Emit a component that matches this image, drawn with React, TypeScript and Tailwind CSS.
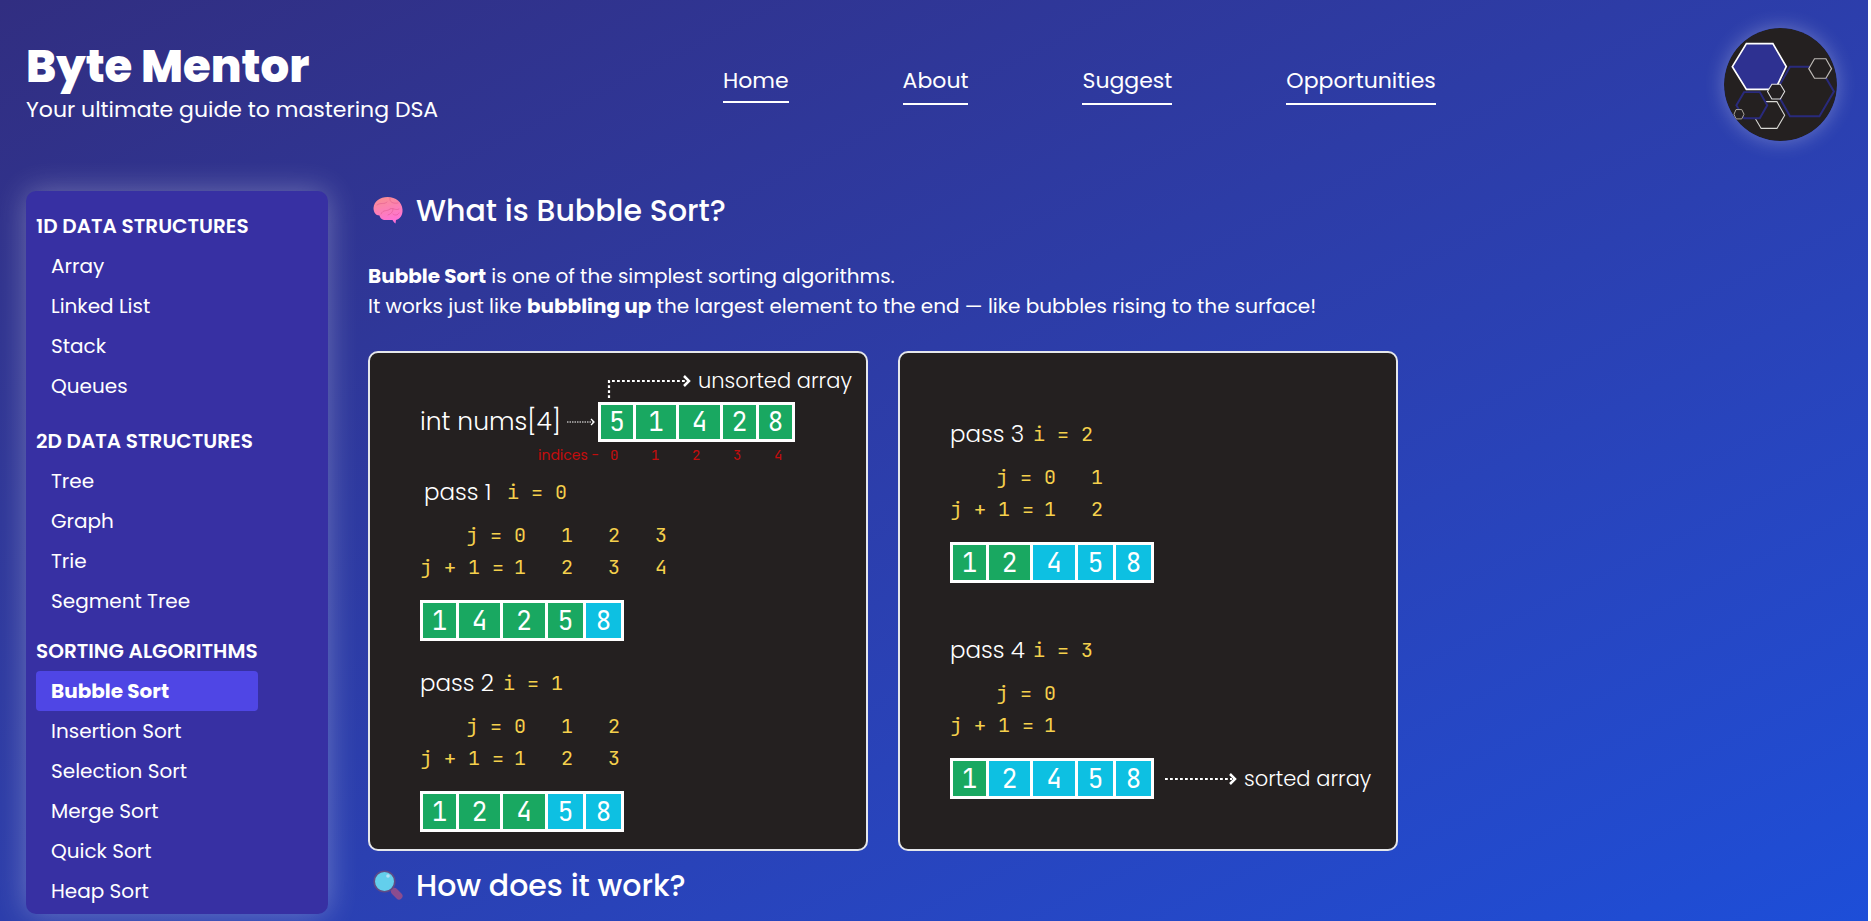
import React from "react";

const SANS = "font-['Poppins','Inter',sans-serif]";
const MONO = "font-['JetBrains_Mono','DejaVu_Sans_Mono',monospace]";

type Section = { title: string; items: string[]; className: string };

const sections: Section[] = [
  { title: "1D DATA STRUCTURES", items: ["Array", "Linked List", "Stack", "Queues"], className: "" },
  { title: "2D DATA STRUCTURES", items: ["Tree", "Graph", "Trie", "Segment Tree"], className: "mt-[15px]" },
  {
    title: "SORTING ALGORITHMS",
    items: ["Bubble Sort", "Insertion Sort", "Selection Sort", "Merge Sort", "Quick Sort", "Heap Sort"],
    className: "mt-[10px]",
  },
];

function Logo() {
  return (
    <svg viewBox="0 0 114 114" className="h-[113px] w-[113px] shrink-0 rounded-full shadow-[0_0_20px_rgba(255,255,255,0.3)]" role="img" aria-label="Byte Mentor logo">
      <circle cx="57" cy="57" r="57" fill="#242020" />
      <g fill="#242020" strokeLinejoin="miter">
        <path d="M66.6 39H96.3L110.9 64 96.3 89H66.6L52.4 64Z" stroke="#292a7c" strokeWidth="2" />
        <path d="M22.6 15.7H49.3L62.8 39 51.7 62H22.6L8.4 39Z" fill="#2e3191" stroke="#fff" strokeWidth="1.7" />
        <path d="M38.5 74.3H53.4L61.2 88 53.4 101.3H37.5L31.4 91Z" stroke="#d8d8d4" strokeWidth="1.1" />
        <path d="M20.2 64.7H36.1L43.6 78 36.1 91H20.2L12.5 78Z" stroke="#292a7c" strokeWidth="2" />
        <path d="M48.3 56.7H56.8L61.2 64 56.8 71.7H48.3L43.9 64Z" stroke="#e0e0e0" strokeWidth="1.1" />
        <path d="M91.3 31H102.8L108.5 41 102.8 50.7H91.3L85.5 41Z" stroke="#bdb9b5" strokeWidth="1.2" />
        <path d="M12.1 82.3H17.9L20.2 87 17.9 91.7H12.1L10.1 87Z" stroke="#aaa59d" strokeWidth="1" />
      </g>
    </svg>
  );
}

function Brain() {
  return (
    <svg viewBox="0 0 30 28" className="h-7 w-[30px]" aria-hidden="true">
      <defs>
        <linearGradient id="brain" x1="0" y1="0" x2="0.3" y2="1">
          <stop offset="0" stopColor="#f9908d" />
          <stop offset="1" stopColor="#ff72d6" />
        </linearGradient>
      </defs>
      <path d="M0.5 12C1 5 7 1 14.500 1C23 1 29 6 29.500 13.500C30 19 27 23 23 24L22.500 27.500C21 26.500 20 25 19.500 24H11C8 23.500 7 21.500 6.500 19.500C2.500 19.500 0.500 16 0.500 12Z" fill="url(#brain)" />
      <path d="M4 9C8 6 11 9 14 6M17 2C16 6 20 8 25 7M8 18C10 13 14 16 17 13M17 13C20 11 22 15 26 13M20 13C20 16 18 18 15 19M20 18C22 20 25 19 26 17" fill="none" stroke="#d94f86" strokeOpacity="0.5" strokeWidth="0.9" strokeLinecap="round" />
    </svg>
  );
}

function Magnifier() {
  return (
    <svg viewBox="0 0 30 30" className="h-[30px] w-[30px]" aria-hidden="true">
      <path d="M18.500 18.500L22 22" stroke="#69538f" strokeWidth="4" />
      <path d="M21.500 21.500L26 26" stroke="#8a4c8f" strokeWidth="7" strokeLinecap="round" />
      <circle cx="11.500" cy="11.500" r="10.300" fill="#63cfec" stroke="#5f4c86" strokeWidth="1.600" />
      <circle cx="15" cy="6" r="1.800" fill="#b5e2f7" />
    </svg>
  );
}

type Cell = { value: number; done?: boolean };
const widths = ["w-[33px]", "w-[41px]", "w-[42px]", "w-[35px]", "w-[35px]"];

function ArrayBoxes({ cells }: { cells: Cell[] }) {
  return (
    <div className={`flex gap-[3px] bg-white p-[3px] text-[26px] leading-[35px] ${MONO}`}>
      {cells.map((c, i) => (
        <span key={i} className={`text-center ${widths[i]} ${c.done ? "bg-[#0dc0e2]" : "bg-[#19a861]"}`}>
          {c.value}
        </span>
      ))}
    </div>
  );
}

function IndexRow({ label, values }: { label: string; values: number[] }) {
  return (
    <div className="flex h-8 items-center">
      <span className="w-[94px] pr-[12px] text-right whitespace-pre">{label}</span>
      {values.map((v) => (
        <span key={v} className="w-[47px]">
          {v}
        </span>
      ))}
    </div>
  );
}

type PassProps = {
  n: number;
  j: number[];
  sorted: number;
  cells: number[];
  headingClass?: string;
  children?: React.ReactNode;
};

function Pass({ n, j, sorted, cells, headingClass = "", children }: PassProps) {
  return (
    <div>
      <div className={`flex h-8 items-center gap-2 ${headingClass}`}>
        <h3 className="w-[75px] text-[23px] font-light">pass {n}</h3>
        <span className={`text-[20px] text-[#f5d04c] ${MONO}`}>i = {n - 1}</span>
      </div>
      <div className={`mt-[11px] text-[20px] text-[#f5d04c] ${MONO}`}>
        <IndexRow label="j =" values={j} />
        <IndexRow label="j + 1 =" values={j.map((v) => v + 1)} />
      </div>
      <div className="mt-[17px] flex items-center gap-[10px]">
        <ArrayBoxes cells={cells.map((value, i) => ({ value, done: i >= sorted }))} />
        {children}
      </div>
    </div>
  );
}

function Card({ className, children }: { className: string; children: React.ReactNode }) {
  return (
    <article className={`aspect-square w-[500px] rounded-[10px] border-2 border-gray-200 bg-[#242020] ${className}`}>
      {children}
    </article>
  );
}

function SortedArray() {
  return (
    <div className="flex items-center gap-[7px]">
      <svg viewBox="0 0 73 14" className="h-[14px] w-[73px]" fill="none" stroke="#fff" strokeWidth="2.200" aria-hidden="true">
        <path d="M1 7H68" strokeDasharray="2.800 2.200" />
        <path d="M66 2L71 7L66 12" strokeWidth="2.500" />
      </svg>
      <span className="text-[21px] font-light whitespace-nowrap">sorted array</span>
    </div>
  );
}

function UnsortedArray() {
  return (
    <div className="flex">
      <div className="flex pt-[49px] text-[25px] leading-8 font-light">
        <span className="w-[147px]">int nums[4]</span>
        <svg viewBox="0 0 28 8" className="mt-[12px] mr-[3px] h-2 w-7" fill="none" stroke="#fff" aria-hidden="true">
          <path d="M0 4H26" strokeDasharray="1.500 1" />
          <path d="M24 1L27 4L24 7" strokeWidth="1.300" />
        </svg>
      </div>
      <div>
        <div className="flex h-[45px] gap-[7px] pl-[9px]">
          <svg viewBox="0 0 84 32" className="mt-[15px] h-8 w-[84px]" fill="none" stroke="#fff" strokeWidth="2.200" aria-hidden="true">
            <path d="M2 26V9H79" strokeDasharray="2.800 2.200" />
            <path d="M77 4L82 9L77 14" strokeWidth="2.500" />
          </svg>
          <span className="pt-2 text-[21px] leading-8 font-light whitespace-nowrap">unsorted array</span>
        </div>
        <div className={`flex w-[197px] gap-[3px] bg-white p-[3px] text-[26px] leading-[34px] ${MONO}`}>
          <span className="w-8 bg-[#19a861] text-center">5</span>
          <span className="w-10 bg-[#19a861] text-center">1</span>
          <span className="w-[41px] bg-[#19a861] text-center">4</span>
          <span className="w-[33px] bg-[#19a861] text-center">2</span>
          <span className="w-[33px] bg-[#19a861] text-center">8</span>
        </div>
      </div>
    </div>
  );
}

function Indices() {
  return (
    <div className="mt-px flex h-6 items-center pl-[118px] text-[14px] text-[#c40d0d]">
      <span className="w-[72px]">indices -</span>
      <span className={`flex ${MONO}`}>
        {[0, 1, 2, 3, 4].map((v) => (
          <span key={v} className="w-[41px]">
            {v}
          </span>
        ))}
      </span>
    </div>
  );
}

export default function App() {
  return (
    <div className="bg-white pr-[3px]">
      <div className={`h-screen overflow-hidden bg-linear-to-br from-[#312e81] to-[#1d4ed8] text-white ${SANS}`}>
        <header className="flex items-start pt-7 pr-[31px] pl-[26px]">
          <div className="w-[697px] pt-[13px]">
            <h1 className="text-[45px] leading-[52px] font-extrabold">Byte Mentor</h1>
            <p className="text-[22px] leading-[34px]">Your ultimate guide to mastering DSA</p>
          </div>
          <nav className="flex flex-1 gap-[114px] pt-[37px] text-[22px] leading-8">
            <a href="#home" className="self-start border-b-2 border-white pb-1">Home</a>
            <a href="#about" className="border-b-2 border-white pb-[6px]">About</a>
            <a href="#suggest" className="border-b-2 border-white pb-[6px]">Suggest</a>
            <a href="#opportunities" className="border-b-2 border-white pb-[6px]">Opportunities</a>
          </nav>
          <Logo />
        </header>

        <div className="mt-[50px] flex items-start gap-10 px-[26px]">
          <aside className="w-[302px] shrink-0 rounded-[10px] bg-[#3730a3] px-[10px] pt-[15px] pb-[3px] text-[20px] leading-10 shadow-[0_0_30px_rgba(255,255,255,0.3)]">
            {sections.map((s) => (
              <section key={s.title} className={s.className}>
                <h2 className="font-semibold whitespace-nowrap">{s.title}</h2>
                <ul className="w-[222px]">
                  {s.items.map((item) => (
                    <li key={item}>
                      <a
                        href={"#" + item.toLowerCase().replace(" ", "-")}
                        className={`block rounded px-[15px] ${item === "Bubble Sort" ? "bg-[#4f46e5] font-bold" : ""}`}
                      >
                        {item}
                      </a>
                    </li>
                  ))}
                </ul>
              </section>
            ))}
          </aside>

          <main className="flex-1">
            <h2 className="flex h-[38px] items-center gap-[13px] pl-[5px] text-[30px] font-medium">
              <Brain />
              What is Bubble Sort?
            </h2>
            <p className="mt-8 text-[20px] leading-[30px]">
              <b>Bubble Sort</b> is one of the simplest sorting algorithms.
              <br />
              It works just like <b>bubbling up</b> the largest element to the end — like bubbles rising to the surface!
            </p>
            <div className="mt-[30px] flex gap-[30px]">
              <Card className="pt-[4px] pl-[50px]">
                <UnsortedArray />
                <Indices />
                <div className="mt-[9px] flex flex-col gap-[26px]">
                  <Pass n={1} j={[0, 1, 2, 3]} sorted={4} cells={[1, 4, 2, 5, 8]} headingClass="pl-1" />
                  <Pass n={2} j={[0, 1, 2]} sorted={3} cells={[1, 2, 4, 5, 8]} />
                </div>
              </Card>
              <Card className="pt-[65px] pl-[50px]">
                <div className="flex flex-col gap-[51px]">
                  <Pass n={3} j={[0, 1]} sorted={2} cells={[1, 2, 4, 5, 8]} />
                  <Pass n={4} j={[0]} sorted={1} cells={[1, 2, 4, 5, 8]}>
                    <SortedArray />
                  </Pass>
                </div>
              </Card>
            </div>
            <h2 className="mt-[15px] flex h-[38px] items-center gap-[13px] pl-[5px] text-[30px] font-medium">
              <Magnifier />
              How does it work?
            </h2>
          </main>
        </div>
      </div>
    </div>
  );
}
